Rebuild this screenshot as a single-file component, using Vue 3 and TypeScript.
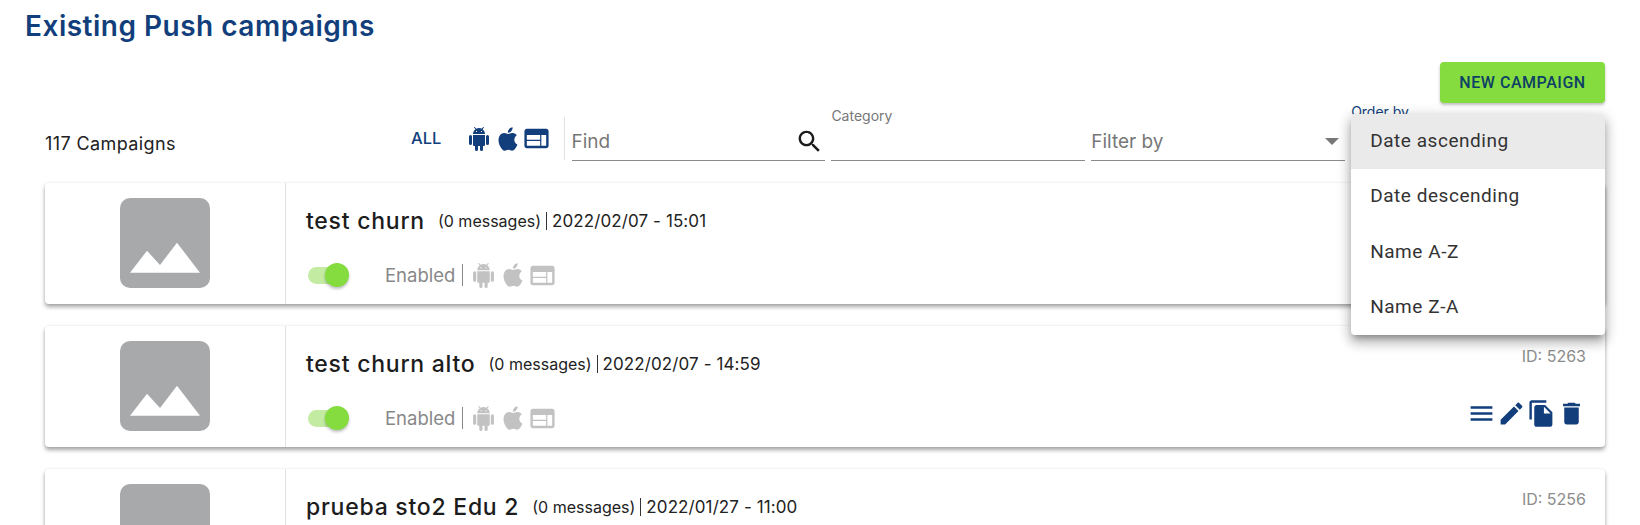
<script setup lang="ts">
interface Campaign { name: string; when: string; id: number }
const campaigns: Campaign[] = [
  { name: 'test churn', when: '2022/02/07 - 15:01', id: 5264 },
  { name: 'test churn alto', when: '2022/02/07 - 14:59', id: 5263 },
  { name: 'prueba sto2 Edu 2', when: '2022/01/27 - 11:00', id: 5256 },
]
const orders = ['Date ascending', 'Date descending', 'Name A-Z', 'Name Z-A']
const icons = {
  android: 'M15,5H14V4H15M10,5H9V4H10M15.53,2.16L16.84,0.85C17.03,0.66 17.03,0.34 16.84,0.14C16.64,-0.05 16.32,-0.05 16.13,0.14L14.65,1.62C13.85,1.23 12.95,1 12,1C11.04,1 10.14,1.23 9.34,1.63L7.85,0.14C7.66,-0.05 7.34,-0.05 7.15,0.14C6.95,0.34 6.95,0.66 7.15,0.85L8.46,2.16C6.97,3.26 6,5 6,7H18C18,5 17,3.25 15.53,2.16M20.5,8A1.5,1.5 0 0,0 19,9.5V16.5A1.5,1.5 0 0,0 20.5,18A1.5,1.5 0 0,0 22,16.5V9.5A1.5,1.5 0 0,0 20.5,8M3.5,8A1.5,1.5 0 0,0 2,9.5V16.5A1.5,1.5 0 0,0 3.5,18A1.5,1.5 0 0,0 5,16.5V9.5A1.5,1.5 0 0,0 3.5,8M6,18A1,1 0 0,0 7,19H8V22.5A1.5,1.5 0 0,0 9.5,24A1.5,1.5 0 0,0 11,22.5V19H13V22.5A1.5,1.5 0 0,0 14.5,24A1.5,1.5 0 0,0 16,22.5V19H17A1,1 0 0,0 18,18V8H6V18Z',
  apple: 'M18.71,19.5C17.88,20.74 17,21.95 15.66,21.97C14.32,22 13.89,21.18 12.37,21.18C10.84,21.18 10.37,21.95 9.1,22C7.79,22.05 6.8,20.68 5.96,19.47C4.25,17 2.94,12.45 4.7,9.39C5.57,7.87 7.13,6.91 8.82,6.88C10.1,6.86 11.32,7.75 12.11,7.75C12.89,7.75 14.37,6.68 15.92,6.84C16.57,6.87 18.39,7.1 19.56,8.82C19.47,8.88 17.39,10.1 17.41,12.63C17.44,15.65 20.06,16.66 20.09,16.67C20.06,16.74 19.67,18.11 18.71,19.5M13,3.5C13.73,2.67 14.94,2.04 15.94,2C16.07,3.17 15.6,4.35 14.9,5.19C14.21,6.04 13.07,6.7 11.95,6.61C11.8,5.46 12.36,4.26 13,3.5Z',
  web: 'M20 4H4c-1.1 0-1.99.9-1.99 2L2 18c0 1.1.9 2 2 2h16c1.1 0 2-.9 2-2V6c0-1.1-.9-2-2-2zm-5 14H4v-4h11v4zm0-5H4V9h11v4zm5 5h-4V9h4v9z',
  menu: 'M3 18h18v-2H3v2zm0-5h18v-2H3v2zm0-7v2h18V6H3z',
  edit: 'M3 17.25V21h3.75L17.81 9.94l-3.75-3.75L3 17.25zM20.71 7.04c.39-.39.39-1.02 0-1.41l-2.34-2.34c-.39-.39-1.02-.39-1.41 0l-1.83 1.83 3.75 3.75 1.83-1.83z',
  copy: 'M16 1H4c-1.1 0-2 .9-2 2v14h2V3h12V1zm-1 4l6 6v10c0 1.1-.9 2-2 2H7.99C6.89 23 6 22.1 6 21l.01-14c0-1.1.89-2 1.99-2h7zm-1 7h5.5L14 6.5V12z',
  trash: 'M6 19c0 1.1.9 2 2 2h8c1.1 0 2-.9 2-2V7H6v12zM19 4h-3.5l-1-1h-5l-1 1H5v2h14V4z',
  search: 'M15.5 14h-.79l-.28-.27C15.41 12.59 16 11.11 16 9.5 16 5.91 13.09 3 9.5 3S3 5.91 3 9.5 5.91 16 9.5 16c1.61 0 3.09-.59 4.23-1.57l.27.28v.79l5 4.99L20.49 19l-4.99-5zm-6 0C7.01 14 5 11.99 5 9.5S7.01 5 9.5 5 14 7.01 14 9.5 11.99 14 9.5 14z',
}
const platforms = [
  { key: 'android', d: icons.android },
  { key: 'apple', d: icons.apple },
  { key: 'web', d: icons.web },
]
const actions = [icons.menu, icons.edit, icons.copy, icons.trash]
</script>

<template>
  <div class="page">
    <h1 class="title">Existing Push campaigns</h1>
    <div class="new-row">
      <button class="new-btn">NEW CAMPAIGN</button>
    </div>

    <div class="toolbar">
      <div class="count">117 Campaigns</div>
      <div class="platform-filter">
        <span class="all">ALL</span>
        <div class="platforms">
          <svg v-for="p in platforms" :key="p.key" viewBox="0 0 24 24" class="pf-icon" :class="p.key"><path :d="p.d" /></svg>
        </div>
      </div>
      <div class="fields">
        <div class="field">
          <div class="line">
            <span class="placeholder">Find</span>
            <svg viewBox="0 0 24 24" class="search"><path :d="icons.search" /></svg>
          </div>
        </div>
        <div class="field">
          <label class="float">Category</label>
          <div class="line"></div>
        </div>
        <div class="field">
          <div class="line">
            <span class="placeholder">Filter by</span>
            <i class="caret"></i>
          </div>
        </div>
        <div class="field order">
          <label class="float navy">Order by</label>
          <div class="line"></div>
          <ul class="menu">
            <li v-for="(o, i) in orders" :key="o" :class="{ active: i === 0 }">{{ o }}</li>
          </ul>
        </div>
      </div>
    </div>

    <div class="cards">
      <article v-for="c in campaigns" :key="c.id" class="card">
        <div class="thumb-cell">
          <svg class="thumb" viewBox="0 0 90 90">
            <rect width="90" height="90" rx="10" fill="#a8a9ab" />
            <path d="M10 74.7 27 52.7 40 67 57 44.7 80 74.7Z" fill="#fff" />
          </svg>
        </div>
        <div class="body">
          <div class="head">
            <span class="name">{{ c.name }}</span>
            <span class="meta">(0 messages)</span>
            <span class="bar"></span>
            <span class="meta date">{{ c.when }}</span>
          </div>
          <div class="status">
            <span class="toggle"><i></i></span>
            <span class="enabled">Enabled</span>
            <span class="bar tall"></span>
            <svg v-for="p in platforms" :key="p.key" viewBox="0 0 24 24" class="st-icon" :class="p.key"><path :d="p.d" /></svg>
          </div>
        </div>
        <div class="side">
          <div class="id">ID: {{ c.id }}</div>
          <div class="actions">
            <svg v-for="a in actions" :key="a" viewBox="0 0 24 24" class="act"><path :d="a" /></svg>
          </div>
        </div>
      </article>
    </div>
  </div>
</template>

<style>
html, body { margin: 0; height: 525px; overflow: hidden; background: #fff; }
</style>

<style scoped>
.page {
  height: 525px;
  overflow: hidden;
  box-sizing: border-box;
  font-family: Inter, "Noto Sans", sans-serif;
  color: #212121;
}
.title {
  margin: 0;
  padding: 8px 0 0 25px;
  height: 53px;
  box-sizing: border-box;
  font: 600 28px/36px Inter, sans-serif;
  letter-spacing: .5px;
  color: #123f7c;
}
.new-row {
  display: flex;
  justify-content: flex-end;
  padding: 9px 35px 0 0;
}
.new-btn {
  width: 165px;
  height: 41px;
  border: 0;
  border-radius: 4px;
  background: #84dc3e;
  color: #0e4065;
  font: 500 16px Roboto, sans-serif;
  letter-spacing: 0.55px;
  box-shadow: 0 2px 3px rgba(0, 0, 0, .25);
}
.toolbar {
  display: flex;
  align-items: flex-end;
  height: 59px;
  margin: -1px 35px 0 45px;
}
.count {
  width: 366px;
  font-size: 18px;
  letter-spacing: .4px;
  line-height: 24px;
  padding-bottom: 5px;
}
.platform-filter {
  display: flex;
  align-items: center;
  width: 154px;
  height: 43px;
  margin-bottom: 1px;
  border-right: 1px solid #e2e2e2;
  box-sizing: border-box;
}
.all {
  width: 56px;
  flex: none;
  font: 500 16.5px Inter, sans-serif;
  color: #123f7c;
  margin-bottom: 2px;
}
.platforms { display: flex; align-items: center; }
.pf-icon { flex: none; fill: #123f7c; }
.pf-icon.android { width: 24px; height: 24px; }
.pf-icon.apple { width: 28px; height: 28px; margin-left: 3px; }
.pf-icon.web { width: 29px; height: 29px; }
.fields {
  flex: 1;
  display: grid;
  grid-template-columns: repeat(4, 1fr);
  column-gap: 6px;
  margin-left: 6.5px;
}
.field { position: relative; height: 59px; display: flex; flex-direction: column; justify-content: flex-end; }
.line {
  height: 38px;
  box-sizing: border-box;
  border-bottom: 1px solid #8a8a8a;
  display: flex;
  align-items: center;
  justify-content: space-between;
}
.placeholder { font-size: 19px; color: #777; }
.search { width: 29px; height: 29px; fill: #1b1b1b; margin-right: 1px; }
.float {
  position: absolute;
  left: 0;
  top: 5px;
  font-size: 14px;
  color: #777;
}
.navy { color: #123f7c; left: 0; top: 1px; }
.caret {
  width: 0; height: 0;
  border-left: 7px solid transparent;
  border-right: 7px solid transparent;
  border-top: 7px solid #777;
  margin-right: 6px;
}
.menu {
  position: absolute;
  z-index: 5;
  top: 12px;
  left: 0;
  right: 0;
  margin: 0;
  padding: 0;
  list-style: none;
  background: #fff;
  border-radius: 4px;
  overflow: hidden;
  box-shadow: 0 5px 6px -3px rgba(0,0,0,.3), 0 8px 12px 1px rgba(0,0,0,.18), 0 3px 14px 2px rgba(0,0,0,.14);
}
.menu li {
  height: 55.25px;
  padding-left: 19px;
  font: 400 19px/53px Roboto, sans-serif;
  letter-spacing: .55px;
  color: #333;
}
.menu li.active { background: #eaeaea; }
.cards {
  display: flex;
  flex-direction: column;
  gap: 22px;
  margin: 22px 35px 0 45px;
}
.card {
  display: flex;
  flex: none;
  height: 121px;
  background: #fff;
  border-radius: 4px;
  box-shadow: 0 3px 4px rgba(0,0,0,.35), 0 0 3px rgba(0,0,0,.08);
}
.thumb-cell {
  width: 241px;
  flex: none;
  border-right: 1px solid #e2e2e2;
  display: flex;
  align-items: flex-start;
  justify-content: center;
  padding-top: 15px;
  box-sizing: border-box;
}
.thumb { width: 90px; height: 90px; }
.body { flex: 1; padding: 24px 0 0 20px; }
.head { display: flex; align-items: center; height: 28px; }
.name { font-size: 23px; font-weight: 500; letter-spacing: .75px; color: #1c1c1c; margin-right: 13px; }
.meta { font-size: 16px; color: #222; }
.date { font-size: 17px; letter-spacing: .1px; }
.bar { width: 1px; height: 18px; background: #333; margin: 0 5px; }
.status { display: flex; align-items: center; margin-top: 26px; height: 28px; }
.toggle {
  position: relative;
  flex: none;
  width: 36px;
  height: 17px;
  border-radius: 9px;
  background: #c3eba2;
  margin: 0 0 0 2px;
}
.toggle i {
  position: absolute;
  right: -5px;
  top: -4px;
  width: 24px;
  height: 24px;
  border-radius: 50%;
  background: #84dc3e;
  box-shadow: 0 2px 3px rgba(0,0,0,.25);
}
.enabled { margin-left: 41px; font-size: 18.5px; color: #888; }
.status .bar { background: #888; height: 22px; margin: 0 8px 0 7px; }
.st-icon { flex: none; fill: #c2c2c2; }
.st-icon.android { width: 25px; height: 25px; }
.st-icon.apple { width: 28px; height: 28px; margin-left: 3px; }
.st-icon.web { width: 29px; height: 29px; margin-left: 1px; }
.side {
  width: 240px;
  flex: none;
  display: flex;
  flex-direction: column;
  align-items: flex-end;
  padding: 21px 19px 0 0;
  box-sizing: border-box;
}
.id { font-size: 16px; line-height: 19px; color: #8c8c8c; }
.actions { display: flex; gap: 1px; margin-top: 33px; }
.act { width: 29px; height: 29px; fill: #123f7c; }
</style>
